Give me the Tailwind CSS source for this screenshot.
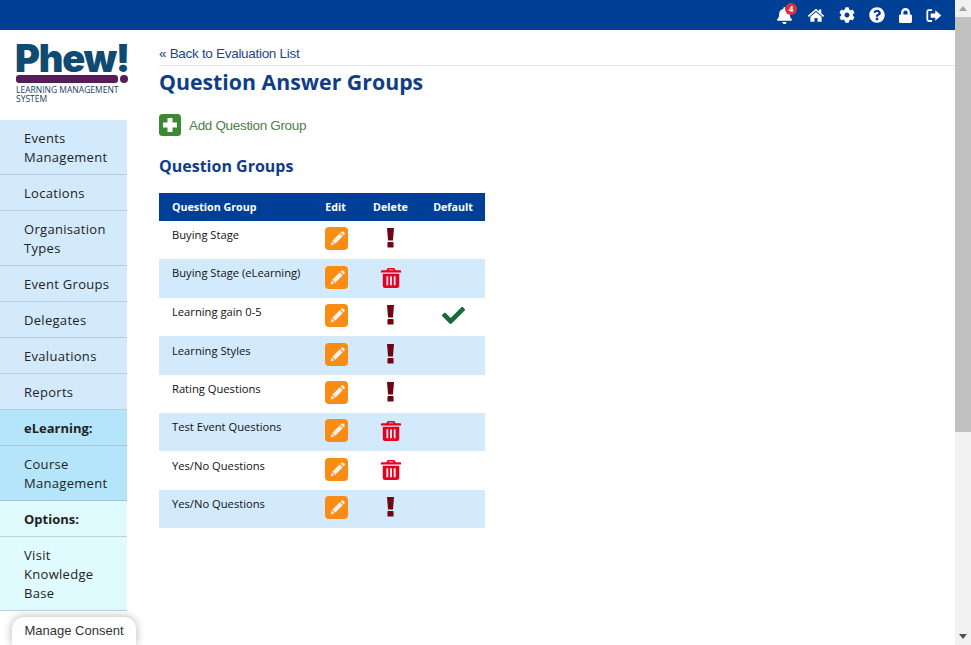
<!DOCTYPE html>
<html lang="en">
<head>
    <meta charset="UTF-8">
    <title>Question Answer Groups</title>
    <script src="https://cdn.jsdelivr.net/npm/@tailwindcss/browser@4"></script>
</head>
<body class="h-screen overflow-hidden bg-white font-['Open_Sans',sans-serif]">
<div class="flex h-[645px] relative">
    <div class="w-[955px] flex flex-col">
        <!-- Top bar -->
        <header class="h-[30px] shrink-0 bg-[#003f96] flex items-center justify-end text-white">
            <div class="relative w-[17px] h-[17px] mr-[14px] mt-[1px]">
                <svg viewBox="0 0 448 512" class="w-[17px] h-[17px] fill-white"><path d="M224 512c35.32 0 63.97-28.65 63.97-64H160.03c0 35.35 28.65 64 63.97 64zm215.39-149.71c-19.32-20.76-55.47-51.99-55.47-154.29 0-77.7-54.48-139.9-127.94-155.16V32c0-17.67-14.32-32-31.98-32s-31.98 14.33-31.98 32v20.84C118.56 68.1 64.08 130.3 64.08 208c0 102.3-36.15 133.53-55.47 154.29-6 6.45-8.66 14.16-8.61 21.71.11 16.4 12.98 32 32.1 32h383.8c19.12 0 32-15.6 32.1-32 .05-7.55-2.61-15.27-8.61-21.71z"/></svg>
                <span class="absolute -top-[4px] left-[9px] w-[12px] h-[12px] rounded-full bg-[#d9323c] text-white text-[8px] font-bold leading-[12px] text-center">4</span>
            </div>
            <svg viewBox="0 0 24 24" class="w-[18px] h-[18px] fill-white mr-[14px]"><path d="M12 3.500 1 13l1.400 1.600L12 6.400l9.600 8.200L23 13l-4-3.400V4.500h-3v2.600z"/><path d="M12 8 4.500 14.400V21H10v-5h4v5h5.500v-6.600z"/></svg>
            <svg viewBox="0 0 512 512" class="w-[16px] h-[16px] fill-white mr-[14px]"><path d="M487.4 315.7l-42.6-24.6c4.3-23.2 4.3-47 0-70.2l42.6-24.6c4.9-2.8 7.1-8.6 5.5-14-11.1-35.6-30-67.8-54.7-94.6-3.8-4.1-10-5.1-14.8-2.3L380.8 110c-17.9-15.4-38.5-27.3-60.8-35.1V25.8c0-5.6-3.9-10.5-9.4-11.7-36.7-8.2-74.3-7.8-109.2 0-5.5 1.2-9.4 6.1-9.4 11.7V75c-22.2 7.9-42.8 19.8-60.8 35.1L88.7 85.5c-4.9-2.8-11-1.9-14.8 2.3-24.7 26.7-43.6 58.9-54.7 94.6-1.7 5.4.6 11.2 5.5 14L67.3 221c-4.3 23.2-4.3 47 0 70.2l-42.6 24.6c-4.9 2.8-7.1 8.6-5.5 14 11.1 35.6 30 67.8 54.7 94.6 3.8 4.1 10 5.1 14.8 2.3l42.6-24.6c17.9 15.4 38.5 27.3 60.8 35.1v49.2c0 5.6 3.9 10.5 9.4 11.7 36.7 8.2 74.3 7.8 109.2 0 5.5-1.2 9.4-6.1 9.4-11.7v-49.2c22.2-7.9 42.8-19.8 60.8-35.1l42.6 24.6c4.9 2.8 11 1.9 14.8-2.3 24.7-26.7 43.6-58.9 54.7-94.6 1.5-5.5-.7-11.3-5.6-14.1zM256 336c-44.1 0-80-35.9-80-80s35.9-80 80-80 80 35.9 80 80-35.9 80-80 80z"/></svg>
            <svg viewBox="0 0 512 512" class="w-[16px] h-[16px] fill-white mr-[14px]"><path d="M504 256c0 136.997-111.043 248-248 248S8 392.997 8 256C8 119.083 119.043 8 256 8s248 111.083 248 248zM262.655 90c-54.497 0-89.255 22.957-116.549 63.758-3.536 5.286-2.353 12.415 2.715 16.258l34.699 26.31c5.205 3.947 12.621 3.008 16.665-2.122 17.864-22.658 30.113-35.797 57.303-35.797 20.429 0 45.698 13.148 45.698 32.958 0 14.976-12.363 22.667-32.534 33.976C247.128 238.528 216 254.941 216 296v4c0 6.627 5.373 12 12 12h56c6.627 0 12-5.373 12-12v-1.333c0-28.462 83.186-29.647 83.186-106.667 0-58.002-60.165-102-116.531-102zM256 338c-25.365 0-46 20.635-46 46 0 25.364 20.635 46 46 46s46-20.636 46-46c0-25.365-20.635-46-46-46z"/></svg>
            <svg viewBox="0 0 448 512" class="w-[13px] h-[15px] fill-white mr-[13px]"><path d="M400 224h-24v-72C376 68.2 307.8 0 224 0S72 68.2 72 152v72H48c-26.5 0-48 21.5-48 48v192c0 26.5 21.5 48 48 48h352c26.5 0 48-21.5 48-48V272c0-26.5-21.5-48-48-48zm-104 0H152v-72c0-39.7 32.3-72 72-72s72 32.3 72 72v72z"/></svg>
            <svg viewBox="0 0 24 24" class="w-[17px] h-[17px] fill-white mr-[13px]"><path d="M10 3H5.500A3.500 3.500 0 0 0 2 6.500v11A3.500 3.500 0 0 0 5.500 21H10v-2.500H5.500a1 1 0 0 1-1-1v-11a1 1 0 0 1 1-1H10z"/><path d="M14.500 4.500 23 12l-8.500 7.500V15H8V9h6.500z"/></svg>
        </header>

        <div class="flex flex-1 min-h-0">
            <!-- Sidebar -->
            <aside class="w-[127px] shrink-0">
                <div class="h-[90px] pl-[15px] pt-[12px]">
                    <div class="font-['Inter',sans-serif] font-black text-[38px] leading-[33px] tracking-[-1.2px] text-[#0f4a70] h-[33px]">Phew!</div>
                    <div class="flex gap-[2px] w-[112px] ml-[1px]">
                        <div class="h-[8px] w-[102px] rounded-[3px] bg-[#561d58]"></div>
                        <div class="h-[8px] w-[8px] rounded-full bg-[#561d58]"></div>
                    </div>
                    <div class="mt-[2px] ml-[1px] text-[8.5px] leading-[9px] text-[#20405c] w-[110px]">LEARNING MANAGEMENT SYSTEM</div>
                </div>
                <nav class="text-[13px] leading-[19px] tracking-[0.3px] text-[#222]">
                    <div class="bg-[#d3eafd] border-b border-[#b9cbd6] pl-[24px] pr-[10px] py-[8.500px] h-[55px]">Events Management</div>
                    <div class="bg-[#d3eafd] border-b border-[#b9cbd6] pl-[24px] pr-[10px] py-[8.500px] h-[36px]">Locations</div>
                    <div class="bg-[#d3eafd] border-b border-[#b9cbd6] pl-[24px] pr-[10px] py-[8.500px] h-[55px]">Organisation Types</div>
                    <div class="bg-[#d3eafd] border-b border-[#b9cbd6] pl-[24px] pr-[10px] py-[8.500px] h-[36px]">Event Groups</div>
                    <div class="bg-[#d3eafd] border-b border-[#b9cbd6] pl-[24px] pr-[10px] py-[8.500px] h-[36px]">Delegates</div>
                    <div class="bg-[#d3eafd] border-b border-[#b9cbd6] pl-[24px] pr-[10px] py-[8.500px] h-[36px]">Evaluations</div>
                    <div class="bg-[#d3eafd] border-b border-[#b9cbd6] pl-[24px] pr-[10px] py-[8.500px] h-[36px]">Reports</div>
                    <div class="bg-[#b5e5fb] border-b border-[#a3c6d6] pl-[24px] pr-[10px] py-[8.500px] h-[36px] font-bold tracking-normal">eLearning:</div>
                    <div class="bg-[#b5e5fb] border-b border-[#a3c6d6] pl-[24px] pr-[10px] py-[8.500px] h-[55px]">Course Management</div>
                    <div class="bg-[#e0fbfd] border-b border-[#bfd3d6] pl-[24px] pr-[10px] py-[8.500px] h-[36px] font-bold tracking-normal">Options:</div>
                    <div class="bg-[#e0fbfd] border-b border-[#bfd3d6] pl-[24px] pr-[10px] py-[8.500px] h-[74px]">Visit Knowledge Base</div>
                </nav>
            </aside>

            <!-- Main content -->
            <main class="flex-1 pl-[32px] pt-[14px]">
                <a class="block pb-[1px] font-['Liberation_Sans',sans-serif] text-[13.500px] leading-[20px] tracking-[-0.3px] text-[#1f4680]">« Back to Evaluation List</a>
                <div class="border-t border-[#e4e8ec]"></div>
                <h1 class="mt-[1px] text-[21.300px] leading-[30px] font-bold text-[#0f3d86]">Question Answer Groups</h1>
                <div class="flex items-center h-[22px] mt-[17px]">
                    <svg viewBox="0 0 22 22" class="w-[22px] h-[22px]"><rect width="22" height="22" rx="3.500" fill="#3a8a33"/><path d="M8.500 4h5v4.500H18v5h-4.500V18h-5v-4.500H4v-5h4.500z" fill="#fff"/></svg>
                    <span class="ml-[8px] mt-[2px] font-['Liberation_Sans',sans-serif] text-[13.500px] tracking-[-0.33px] text-[#4f7d4c]">Add Question Group</span>
                </div>
                <h2 class="mt-[18px] text-[16px] leading-[24px] font-bold text-[#0f3d86]">Question Groups</h2>

                <table id="groups" class="mt-[15px] w-[326px] table-fixed border-collapse text-[11.200px]">
                    <thead>
                        <tr class="h-[28px] bg-[#003f96] text-white text-[10.700px]">
                            <th class="w-[149px] pl-[13px] pt-[1px] text-left font-bold">Question Group</th>
                            <th class="w-[55px] pt-[1px] text-center font-bold">Edit</th>
                            <th class="w-[55px] pt-[1px] text-center font-bold">Delete</th>
                            <th class="w-[67px] pt-[1px] pl-[3px] text-center font-bold">Default</th>
                        </tr>
                    </thead>
                    <tbody id="rows"></tbody>
                </table>
            </main>
        </div>
    </div>

    <!-- Scrollbar -->
    <div class="w-[16px] shrink-0 bg-[#f1f1f1] flex flex-col items-center">
        <div class="h-[17px] flex items-center justify-center"><div class="w-0 h-0 border-x-[4px] border-x-transparent border-b-[5px] border-b-[#a3a3a3]"></div></div>
        <div class="w-[16px] h-[415px] bg-[#c1c1c1]"></div>
        <div class="mt-auto h-[17px] flex items-center justify-center"><div class="w-0 h-0 border-x-[4px] border-x-transparent border-t-[5px] border-t-[#505050]"></div></div>
    </div>

    <!-- Consent tab -->
    <div class="absolute left-[12px] bottom-0 w-[124px] h-[28px] bg-white rounded-t-[12px] shadow-[0_0_10px_rgba(0,0,0,0.3)] font-['Liberation_Sans',sans-serif] text-[13px] leading-[28px] text-[#333] text-center">Manage Consent</div>
</div>

<script>
    const edit = `<span class="block ml-[17px] w-[23px] h-[23px] rounded-[4px] bg-[#fb8c13]"><svg viewBox="0 0 23 23" class="w-[23px] h-[23px] fill-[#f4f1ec]"><path d="M7.300 13.700 14.700 6.300l3 3-7.400 7.400z"/><path d="M15.500 5.500l.8-.8a1.500 1.500 0 0 1 2.100 0l.9.9a1.500 1.500 0 0 1 0 2.100l-.8.8z"/><path d="M6.700 14.500l2.800 2.800-3.900 1.100z"/></svg></span>`;
    const warn = `<svg viewBox="0 0 10 24" class="block mx-auto w-[9px] h-[21px]"><path d="M1 1h8L7.800 15.500H2.200z" fill="#700412"/><rect x="1.500" y="17" width="7" height="6.500" rx="1" fill="#700412"/></svg>`;
    const trash = `<svg viewBox="0 0 24 24" class="block mx-auto w-[22px] h-[23px]"><path fill="#e8001c" fill-rule="evenodd" d="M8.500 1.500h7l1.600 2.700H22a1 1 0 0 1 1 1v1.300H1V5.200a1 1 0 0 1 1-1h4.900zM9.800 3.200l-.6 1h5.600l-.6-1zM3 8h18v13a2.500 2.500 0 0 1-2.500 2.500h-13A2.500 2.500 0 0 1 3 21zM7 10.500v10h2v-10zM11 10.500v10h2v-10zM15 10.500v10h2v-10z"/></svg>`;
    const check = `<svg viewBox="0 0 512 512" class="block mx-auto w-[23px] h-[23px] fill-[#176b3a]"><path d="M173.898 439.404l-166.400-166.400c-9.997-9.997-9.997-26.206 0-36.204l36.203-36.204c9.997-9.998 26.207-9.998 36.204 0L192 312.690 432.095 72.596c9.997-9.997 26.207-9.997 36.204 0l36.203 36.204c9.997 9.997 9.997 26.206 0 36.204l-294.400 294.401c-9.998 9.997-26.207 9.997-36.204-.001z"/></svg>`;

    const groups = [
        { name: "Buying Stage", del: warn },
        { name: "Buying Stage (eLearning)", del: trash, tall: true },
        { name: "Learning gain 0-5", del: warn, def: true },
        { name: "Learning Styles", del: warn, tall: true, low: true },
        { name: "Rating Questions", del: warn },
        { name: "Test Event Questions", del: trash },
        { name: "Yes/No Questions", del: trash, tall: true, low: true },
        { name: "Yes/No Questions", del: warn }
    ];

    document.getElementById("rows").innerHTML = groups.map(g => `
        <tr class="${g.tall ? "h-[39px]" : "h-[38px]"} even:bg-[#d3eafd] text-[#111]">
            <td class="pl-[13px] align-top ${g.low ? "pt-[7px]" : "pt-[6px]"} leading-[16px]">${g.name}</td>
            <td class="align-top ${g.tall ? "pt-[7px]" : "pt-[6px]"}">${edit}</td>
            <td class="align-top ${g.tall ? "pt-[7px]" : "pt-[6px]"}">${g.del}</td>
            <td class="align-top pl-[4px] pt-[6px]">${g.def ? check : ""}</td>
        </tr>`).join("");
</script>
</body>
</html>
